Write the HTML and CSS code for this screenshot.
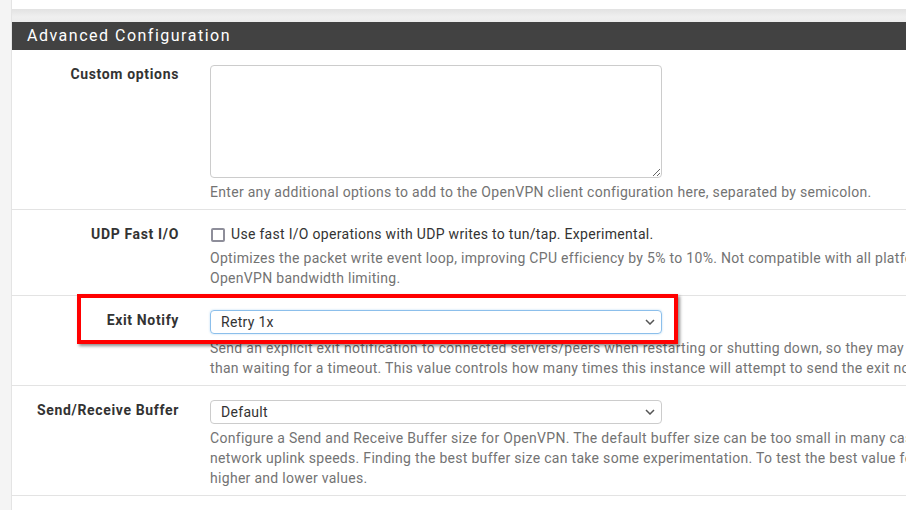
FILE: index.html
```html
<!DOCTYPE html>
<html lang="en">
<head>
    <meta charset="UTF-8">
    <title>Advanced Configuration</title>
    <link rel="stylesheet" href="styles.css">
</head>
<body>

<div class="page">
    <div class="top-panel"></div>
    <div class="gap"></div>

    <div class="panel">
        <h2 class="panel-title">Advanced Configuration</h2>

        <div class="form-row">
            <label class="form-label">Custom options</label>
            <div class="form-control">
                <textarea class="textarea"></textarea>
                <p class="help">Enter any additional options to add to the OpenVPN client configuration here, separated by semicolon.</p>
            </div>
        </div>

        <div class="form-row">
            <label class="form-label">UDP Fast I/O</label>
            <div class="form-control">
                <label class="check"><input type="checkbox"> Use fast I/O operations with UDP writes to tun/tap. Experimental.</label>
                <p class="help">Optimizes the packet write event loop, improving CPU efficiency by 5% to 10%. Not compatible with all platforms, and not compatible with OpenVPN bandwidth limiting.</p>
            </div>
        </div>

        <div class="form-row">
            <label class="form-label">Exit Notify</label>
            <div class="form-control">
                <div class="select focused">
                    <span>Retry 1x</span>
                    <svg class="chevron" width="10" height="6" viewBox="0 0 10 6"><path d="M1 1l4 4 4-4" fill="none" stroke="#555" stroke-width="1.5"/></svg>
                </div>
                <p class="help">Send an explicit exit notification to connected servers/peers when restarting or shutting down, so they may immediately disconnect rather than waiting for a timeout. This value controls how many times this instance will attempt to send the exit notification.</p>
            </div>
            <div class="highlight"></div>
        </div>

        <div class="form-row">
            <label class="form-label">Send/Receive Buffer</label>
            <div class="form-control">
                <div class="select">
                    <span>Default</span>
                    <svg class="chevron" width="10" height="6" viewBox="0 0 10 6"><path d="M1 1l4 4 4-4" fill="none" stroke="#555" stroke-width="1.5"/></svg>
                </div>
                <p class="help">Configure a Send and Receive Buffer size for OpenVPN. The default buffer size can be too small in many cases, depending on hardware and network uplink speeds. Finding the best buffer size can take some experimentation. To test the best value for a site, start at 512KiB and test higher and lower values.</p>
            </div>
        </div>
    </div>
</div>

</body>
</html>
```

FILE: styles.css
```css
body {
    margin: 0;
    background: #f4f4f4;
    font-family: Roboto, "Liberation Sans", sans-serif;
    font-size: 14px;
    color: #333;
    overflow: hidden;
}

.page {
    margin-left: 11px;
    border-left: 1px solid #e4e4e4;
    height: 510px;
    overflow: hidden;
}

.top-panel {
    height: 9px;
    background: #fff;
}

.gap {
    height: 13px;
    background: linear-gradient(to bottom, #e2e2e2, #efefef 60%, #ececec);
}

.panel {
    background: #fff;
    min-height: 500px;
}

.panel-title {
    margin: 0;
    height: 28px;
    line-height: 27px;
    padding-left: 15px;
    background: #424242;
    color: #fff;
    font-size: 16px;
    font-weight: normal;
    letter-spacing: 1.5px;
}

.form-row {
    position: relative;
    display: flex;
    padding: 14px 0 7px;
    border-bottom: 1px solid #e3e3e3;
}

.form-label {
    width: 167px;
    flex-shrink: 0;
    padding-right: 16px;
    text-align: right;
    font-weight: bold;
    line-height: 20px;
    color: #333;
    letter-spacing: 0.65px;
}

.form-control {
    width: 925px;
    flex-shrink: 0;
    padding-left: 15px;
}

.textarea {
    display: block;
    width: 452px;
    height: 113px;
    box-sizing: border-box;
    margin: 1px 0 0;
    border: 1px solid #ccc;
    border-radius: 4px;
    font-family: inherit;
}

.help {
    margin: 4px 0 0;
    line-height: 20px;
    color: #737373;
    letter-spacing: 0.3px;
}

.check {
    display: flex;
    align-items: center;
    line-height: 20px;
    letter-spacing: 0.3px;
    color: #333;
}

.check input {
    appearance: none;
    width: 14px;
    height: 14px;
    margin: 1px 6px 0 1px;
    border: 2px solid #8e8e9a;
    border-radius: 2px;
    box-sizing: border-box;
}

.select {
    display: flex;
    align-items: center;
    justify-content: space-between;
    width: 452px;
    height: 24px;
    box-sizing: border-box;
    padding: 0 6px 0 10px;
    border: 1px solid #ccc;
    border-radius: 4px;
    letter-spacing: 0.3px;
    color: #333;
}

.select.focused {
    border-color: #8cbfeb;
    box-shadow: 0 0 2px rgba(102, 175, 233, 0.5);
}

.highlight {
    position: absolute;
    left: 65px;
    top: -2px;
    width: 593px;
    height: 42px;
    border: 4px solid #f00;
    box-shadow: 2px 2px 3px rgba(0, 0, 0, 0.45);
}
```
